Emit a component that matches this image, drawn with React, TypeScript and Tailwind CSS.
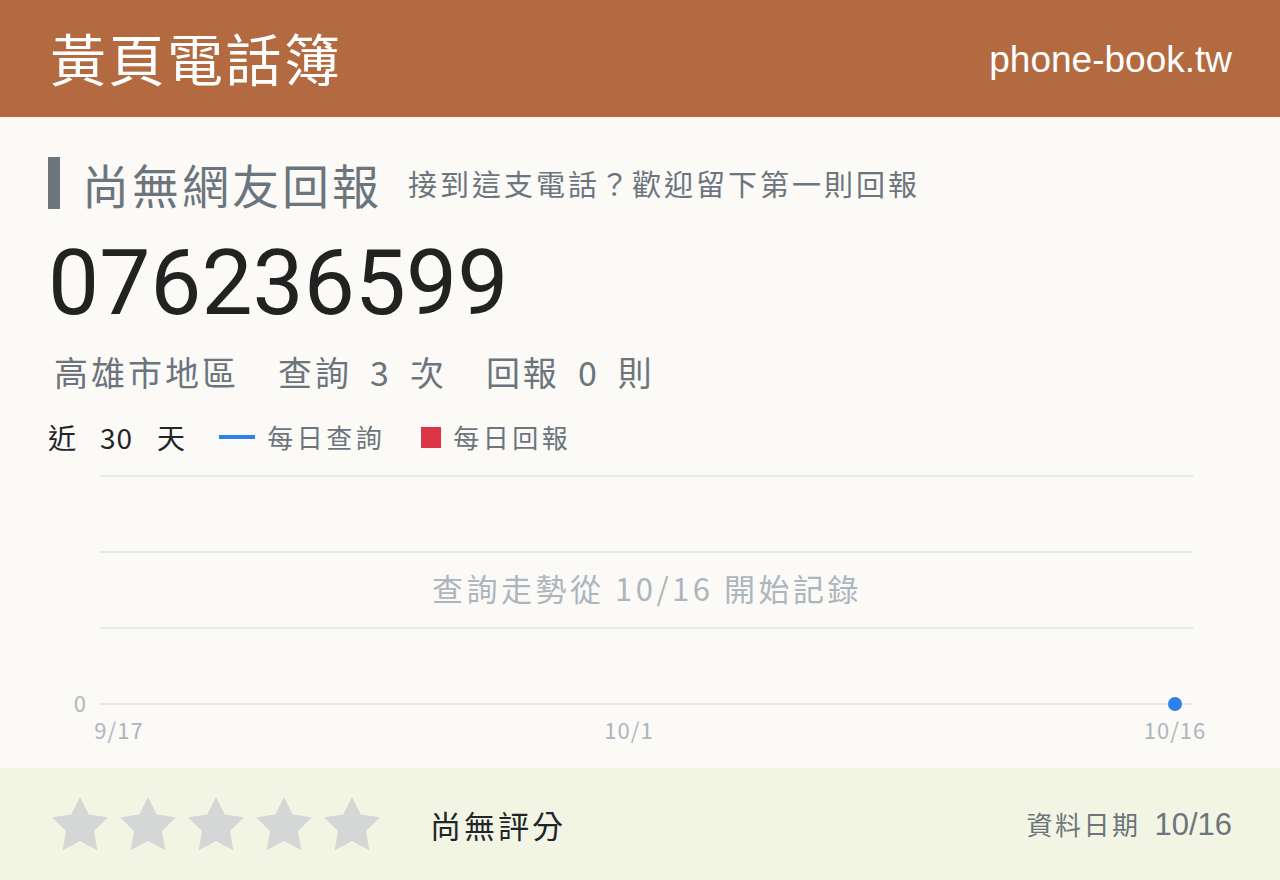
const cjk = "font-['Noto_Sans_CJK_TC','Noto_Sans_CJK_SC',sans-serif]";

const gridY = [16, 92, 168, 244];

const xTicks = [
  { x: 119, label: "9/17" },
  { x: 629, label: "10/1" },
  { x: 1175, label: "10/16" },
];

const stats = [
  ["高雄市地區"],
  ["查詢", "3", "次"],
  ["回報", "0", "則"],
];

function StarIcon() {
  return (
    <svg width="56" height="54" viewBox="2 2 20 19.3" className="shrink-0">
      <polygon
        points="12,2 15.09,8.26 22,9.27 17,14.14 18.18,21.02 12,17.77 5.82,21.02 7,14.14 2,9.27 8.91,8.26"
        fill="#d5d6d6"
      />
    </svg>
  );
}

function TrendChart() {
  return (
    <svg width="1280" height="300" className="block">
      {gridY.map((y) => (
        <line key={y} x1="100" x2="1193" y1={y} y2={y} stroke="#e6e8eb" strokeWidth="2" />
      ))}
      <text
        x="86"
        y={gridY[3] + 8}
        textAnchor="end"
        fontSize="22"
        fill="#adb5bd"
        fontFamily="'Noto Sans CJK TC', sans-serif"
      >
        0
      </text>
      {xTicks.map((t) => (
        <text
          key={t.label}
          x={t.x}
          y={279}
          textAnchor="middle"
          fontSize="22"
          letterSpacing="1"
          fill="#adb5bd"
          fontFamily="'Noto Sans CJK TC', sans-serif"
        >
          {t.label}
        </text>
      ))}
      <text
        x="647"
        y="141"
        textAnchor="middle"
        fontSize="31"
        letterSpacing="3.5"
        fill="#adb5bd"
        fontFamily="'Noto Sans CJK TC', sans-serif"
      >
        查詢走勢從 10/16 開始記錄
      </text>
      <circle cx="1175" cy={gridY[3]} r="7" fill="#2f80ed" />
    </svg>
  );
}

export default function App() {
  return (
    <div className={`w-[1280px] h-[880px] flex flex-col bg-[#fbfaf7] ${cjk}`}>
      {/* Top bar */}
      <header className="h-[117px] shrink-0 bg-[#b46a40] flex items-center justify-between pl-[50px] pr-[48px]">
        <h1 className="text-white text-[56px] leading-none tracking-[2.5px] -mt-[4px]">黃頁電話簿</h1>
        <span className="text-white text-[37px] leading-none font-['Liberation_Sans',sans-serif] mt-[2px]">
          phone-book.tw
        </span>
      </header>

      <main className="flex-1 flex flex-col px-[48px] pt-[31px]">
        {/* Report status */}
        <div className="h-[70px] flex items-center">
          <div className="w-[12px] h-[52px] bg-[#6c757d]" />
          <h2 className="ml-[22px] text-[47px] leading-none text-[#6c757d] tracking-[3px]">尚無網友回報</h2>
          <p className="ml-[26px] text-[29px] leading-none text-[#6c757d] tracking-[3px]">
            接到這支電話？歡迎留下第一則回報
          </p>
        </div>

        {/* Number */}
        <div className="h-[130px] flex items-center">
          <span className="text-[91px] leading-none text-[#222] font-['Roboto','Liberation_Sans',sans-serif]">
            076236599
          </span>
        </div>

        {/* Stats */}
        <div className="h-[48px] flex items-center gap-[39px] pl-[6px] text-[34px] leading-none text-[#6c757d] tracking-[3px]">
          {stats.map((group) => (
            <div key={group.join("")} className="flex items-center gap-[18px]">
              {group.map((t) => (
                <span key={t}>{t}</span>
              ))}
            </div>
          ))}
        </div>

        {/* Legend */}
        <div className="mt-[18px] h-[46px] flex items-center">
          <div className="flex items-center gap-[24px] text-[28px] leading-none text-[#212529]">
            <span>近</span>
            <span className="tracking-[1px]">30</span>
            <span>天</span>
          </div>
          <span className="ml-[34px] w-[36px] h-[4px] bg-[#2f80ed]" />
          <span className="ml-[12px] text-[26px] leading-none text-[#6c757d] tracking-[3.5px]">每日查詢</span>
          <span className="ml-[36px] w-[20px] h-[21px] bg-[#dc3545]" />
          <span className="ml-[12px] text-[26px] leading-none text-[#6c757d] tracking-[3.5px]">每日回報</span>
        </div>

        <div className="-mx-[48px]">
          <TrendChart />
        </div>
      </main>

      {/* Rating footer */}
      <footer className="h-[112px] shrink-0 bg-[#f2f5e3] flex items-center pl-[52px] pr-[48px]">
        <div className="flex items-center gap-[12px]">
          {[0, 1, 2, 3, 4].map((i) => (
            <StarIcon key={i} />
          ))}
        </div>
        <span className="ml-[50px] text-[31px] leading-none text-[#212529] tracking-[3px]">尚無評分</span>
        <div className="ml-auto flex items-baseline gap-[14px] text-[#6c757d] leading-none">
          <span className="text-[26px] tracking-[2.5px]">資料日期</span>
          <span className="text-[31px] font-['Liberation_Sans',sans-serif]">10/16</span>
        </div>
      </footer>
    </div>
  );
}
